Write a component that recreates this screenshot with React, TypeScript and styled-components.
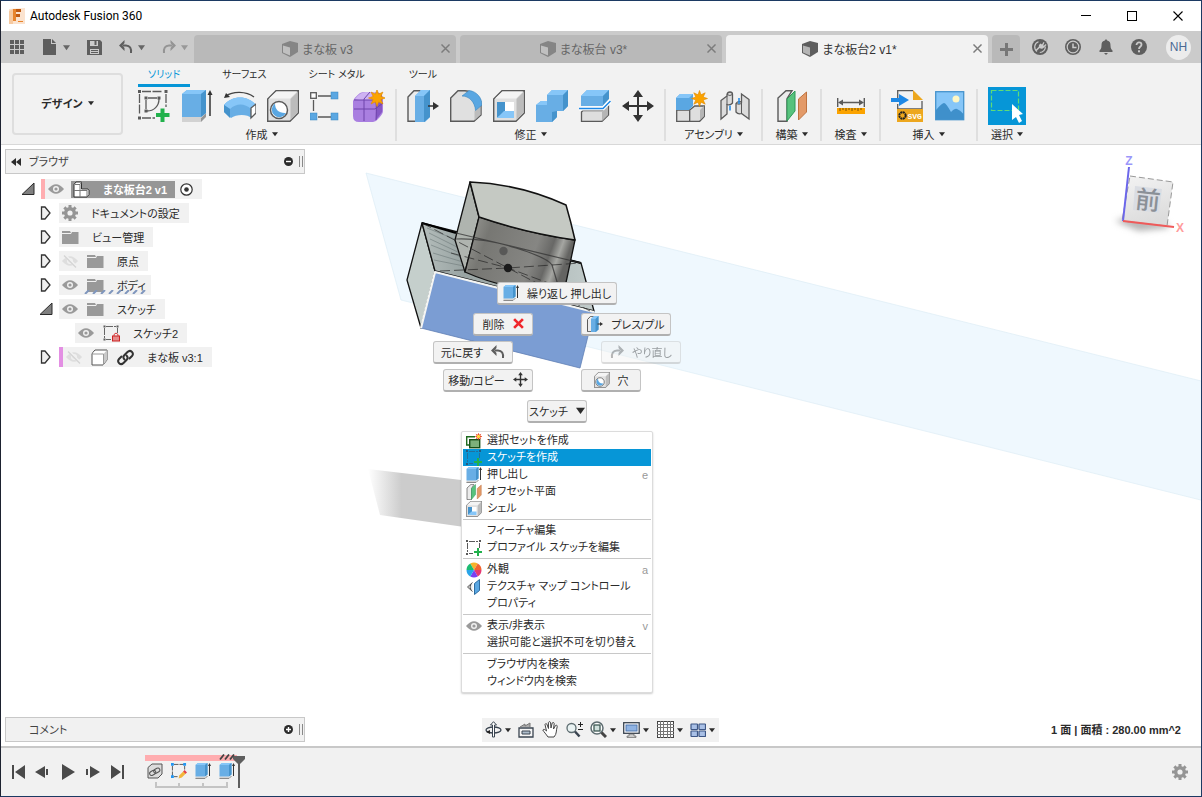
import React from "react";
import styled, { createGlobalStyle, css } from "styled-components";

const GlobalStyle = createGlobalStyle`
  *, *::before, *::after { box-sizing: border-box; }
  body {
    margin: 0;
    background: #fff;
    color: #2b2b2b;
    font-family: "Liberation Sans", "Noto Sans CJK JP", sans-serif;
    font-size: 11px;
    font-feature-settings: "palt";
  }
  button {
    margin: 0;
    padding: 0;
    border: 0;
    background: none;
    color: inherit;
    font: inherit;
    font-feature-settings: inherit;
    white-space: nowrap;
  }
  ul { list-style: none; margin: 0; padding: 0; }
  svg { display: block; flex: none; }
`;

/* ---------- frame ---------- */

const Window = styled.div`
  display: flex;
  flex-direction: column;
  min-height: 100vh;
  border: 1px solid #1c3a63;
  border-left-color: #1d2230;
`;

const TitleBar = styled.header`
  display: flex;
  align-items: center;
  height: 30px;
  padding-left: 8px;
  gap: 5px;
  background: #fff;
  color: #000;
`;

const WindowTitle = styled.h1`
  margin: 0;
  flex: 1;
  font: 400 12px Roboto, "Noto Sans", sans-serif;
`;

const Captions = styled.div`
  display: flex;
`;

const CaptionButton = styled.button`
  display: grid;
  place-items: center;
  width: 46px;
  height: 30px;
`;

const TabStrip = styled.div`
  display: flex;
  align-items: center;
  height: 32px;
  background: #cbcbcb;
  color: #666;
`;

const QuickTools = styled.div`
  display: flex;
  align-items: center;
  width: 189px;
  padding-left: 9px;
  gap: 17px;
`;

const QuickButton = styled.button<{ $dim?: boolean }>`
  display: flex;
  align-items: center;
  gap: 5px;
  opacity: ${(p) => (p.$dim ? 0.5 : 1)};
`;

const DocumentTabs = styled.div`
  display: flex;
  flex: 1;
  align-self: flex-end;
  gap: 4px;
  padding: 0 4px;
`;

const DocumentTab = styled.div<{ $active?: boolean }>`
  display: flex;
  flex: 1;
  align-items: center;
  height: 28px;
  padding: 0 6px 1px 0;
  border-radius: 4px 4px 0 0;
  background: ${(p) => (p.$active ? "#f2f2f2" : "#b9b9b9")};
  color: ${(p) => (p.$active ? "#333" : "#666")};
`;

const DocumentName = styled.button`
  display: flex;
  flex: 1;
  align-items: center;
  justify-content: center;
  gap: 4px;
  font-size: 12px;
`;

const IconButton = styled.button`
  display: grid;
  place-items: center;
`;

const CloseTab = styled(IconButton)`
  color: #7c7c7c;
`;

const NewTab = styled(IconButton)`
  align-self: flex-end;
  width: 28px;
  height: 28px;
  border-radius: 4px 4px 0 0;
  background: #b9b9b9;
`;

const Account = styled.div`
  display: flex;
  align-items: center;
  gap: 17px;
  padding: 0 10px 0 12px;
`;

const Avatar = styled.button`
  width: 25px;
  height: 25px;
  margin-left: 2px;
  border-radius: 50%;
  background: #ececec;
  color: #4b6a94;
  font-size: 12px;
`;

/* ---------- ribbon ---------- */

const Ribbon = styled.div`
  display: flex;
  height: 82px;
  border-bottom: 1px solid #d8d8d8;
  background: #f2f2f2;
`;

const Workspace = styled.button`
  display: flex;
  align-items: center;
  justify-content: center;
  gap: 5px;
  flex: none;
  width: 111px;
  height: 62px;
  margin: 10px 5px 0 11px;
  padding-bottom: 2px;
  border: 2px solid #dedede;
  border-radius: 4px;
  font-weight: 700;
`;

const RibbonBody = styled.div`
  display: flex;
  flex-direction: column;
  flex: 1;
`;

const RibbonTabs = styled.div`
  display: flex;
  gap: 22px;
  height: 24px;
  padding-left: 10px;
`;

const RibbonTab = styled.button<{ $active?: boolean }>`
  min-width: 52px;
  height: 24px;
  padding: 0 10px;
  border-bottom: 3px solid ${(p) => (p.$active ? "#0696d7" : "transparent")};
  color: ${(p) => (p.$active ? "#0696d7" : "inherit")};
  font-size: 10px;
`;

const Groups = styled.div`
  display: flex;
`;

const Group = styled.div`
  display: flex;
  flex-direction: column;
  align-items: center;
  min-width: 59px;
  height: 52px;
  margin-top: 2px;
  padding: 0 10px;
  border-right: 2px solid #dfdfdf;
  &:last-child {
    min-width: 0;
    border-right: 0;
  }
`;

const GroupIcons = styled.div`
  display: flex;
  flex: none;
  align-items: center;
  gap: 11px;
  height: 34px;
`;

const SelectTool = styled(IconButton)`
  width: 38px;
  height: 38px;
  background: #0696d7;
`;

const GroupLabel = styled.button`
  display: flex;
  flex: none;
  align-items: center;
  gap: 4px;
  height: 18px;
  padding-top: 3px;
`;

/* ---------- canvas ---------- */

const Canvas = styled.main`
  position: relative;
  display: flex;
  flex: 1;
  flex-direction: column;
  justify-content: space-between;
  min-height: 560px;
  overflow: hidden;
  background: #fff;
`;

const Scene = styled.svg`
  position: absolute;
  inset: 0;
  width: 100%;
  height: 100%;
`;

const CanvasTop = styled.div`
  position: relative;
  display: flex;
  align-items: flex-start;
  justify-content: space-between;
  padding: 4px 10px 0 4px;
`;

const Browser = styled.nav`
  width: 300px;
`;

const PanelHeader = styled.div`
  display: flex;
  align-items: center;
  width: 300px;
  height: 25px;
  padding: 0 1px 0 5px;
  border: 1px solid #c8c8c8;
  background: #f1f1f1;
  color: #444;
`;

const PanelTitle = styled.span`
  flex: 1;
  padding: 0 0 2px 8px;
`;

const PanelGrip = styled.span`
  width: 4px;
  height: 11px;
  margin-left: 6px;
  border: solid #888;
  border-width: 0 1px;
`;

const CollapseSlot = styled.span`
  width: 10px;
`;

const Tree = styled.ul`
  padding-top: 3px;
`;

const TreeRow = styled.li<{ $level: number }>`
  display: flex;
  align-items: center;
  gap: 6px;
  height: 24px;
  padding-left: ${(p) => 16 + p.$level * 18}px;
`;

const Twisty = styled.button`
  display: grid;
  place-items: center;
  width: 14px;
  height: 16px;
`;

const TreeItem = styled.div<{ $bar?: string }>`
  display: flex;
  align-items: center;
  gap: 9px;
  height: 20px;
  padding: 0 9px 0 3px;
  background: #f1f1f1;
  ${(p) =>
    p.$bar &&
    css`
      border-left: 4px solid ${p.$bar};
    `}
`;

const TreeName = styled.span`
  padding: 0 0 1px 4px;
`;

const ComponentChip = styled.span`
  display: flex;
  align-items: center;
  gap: 13px;
  height: 17px;
  margin: 0 -4px 0 -2px;
  padding: 0 8px 0 2px;
  background: #969696;
  color: #fff;
  font-weight: 700;
`;

const HatchedItem = styled.span`
  position: relative;
  display: flex;
  align-items: center;
  gap: 13px;
  height: 20px;
  margin-right: -8px;
  padding-right: 4px;
`;

const RowHatch = styled.svg`
  position: absolute;
  left: -3px;
  bottom: 1px;
  width: 100%;
  height: 4px;
`;

const MarkingButton = styled.button<{ $x: number; $y: number; $w: number; $dim?: boolean }>`
  position: absolute;
  left: ${(p) => p.$x}px;
  top: ${(p) => p.$y}px;
  display: flex;
  align-items: center;
  justify-content: center;
  gap: 8px;
  min-width: ${(p) => p.$w}px;
  height: 23px;
  padding-bottom: 1px;
  border: 1px solid #c4c4c4;
  border-bottom: 2px solid #b0b0b0;
  border-radius: 3px;
  background: #f2f2f2;
  opacity: ${(p) => (p.$dim ? 0.45 : 1)};
`;

const ContextMenu = styled.div`
  position: absolute;
  left: 460px;
  top: 286px;
  width: 192px;
  padding: 0 1px 2px;
  border: 1px solid #dcdcdc;
  border-radius: 2px;
  background: #fff;
  box-shadow: 0 1px 2px rgba(0, 0, 0, 0.2);
`;

const MenuItem = styled.button<{ $selected?: boolean }>`
  display: flex;
  align-items: center;
  gap: 5px;
  width: 100%;
  height: 17px;
  padding: 0 3px;
  background: ${(p) => (p.$selected ? "#0696d7" : "transparent")};
  color: ${(p) => (p.$selected ? "#fff" : "inherit")};
`;

const MenuIcon = styled.span`
  width: 16px;
  height: 16px;
`;

const MenuText = styled.span`
  flex: 1;
  padding-bottom: 3px;
  text-align: left;
`;

const Shortcut = styled.kbd`
  color: #999;
  font: inherit;
`;

const MenuRule = styled.hr`
  height: 1px;
  margin: 2px 0;
  border: 0;
  background: #c8c8c8;
`;

const CanvasBottom = styled.div`
  position: relative;
  display: grid;
  grid-template-columns: 1fr auto 1fr;
  align-items: center;
  padding: 0 5px 4px 4px;
`;

const NavBar = styled.div`
  display: flex;
  align-items: center;
  justify-content: space-between;
  width: 237px;
  height: 24px;
  padding: 0 4px 0 3px;
  background: #f1f1f1;
`;

const NavButton = styled.button`
  display: flex;
  align-items: center;
  gap: 3px;
`;

const Status = styled.p`
  margin: 0;
  padding: 0 15px 2px 0;
  text-align: right;
  font-weight: 700;
`;

/* ---------- timeline ---------- */

const Timeline = styled.footer`
  display: flex;
  align-items: center;
  height: 50px;
  padding: 0 13px 0 9px;
  border-top: 2px solid #c8c8c8;
  background: #f1f1f1;
`;

const Playback = styled.div`
  display: flex;
  gap: 9px;
  width: 135px;
`;

const History = styled.div`
  display: flex;
  flex-direction: column;
  width: 92px;
  height: 34px;
  border-top: 6px solid #ffadb0;
`;

const HistoryIcons = styled.div`
  display: flex;
  gap: 8px;
  padding: 2px 2px 3px;
`;

const HistoryButton = styled(IconButton)`
  position: relative;
`;

const Hatch = styled.svg`
  position: absolute;
  left: 0;
  top: -9px;
`;

const Marker = styled.svg`
  margin-left: -4px;
`;

const Spacer = styled.div`
  flex: 1;
`;

/* ---------- icons ---------- */

type IconProps = { size?: number };

const Art = ({ size = 32, box = 32, children }: { size?: number; box?: number; children: React.ReactNode }) => (
  <svg width={size} height={size} viewBox={`0 0 ${box} ${box}`} aria-hidden="true">
    {children}
  </svg>
);

const Caret = ({ size = 7 }: IconProps) => (
  <svg width={size} height={size} viewBox="0 0 8 8" aria-hidden="true">
    <path d="M0 1.500h8L4 7z" fill="currentColor" />
  </svg>
);

const Cross = ({ size = 9, width = 1.6 }: { size?: number; width?: number }) => (
  <svg width={size} height={size} viewBox="0 0 10 10" aria-hidden="true">
    <path d="M.5.5l9 9M9.500.5l-9 9" stroke="currentColor" strokeWidth={width} fill="none" />
  </svg>
);

const starPoints = (cx: number, cy: number, outer: number, inner: number, n: number) =>
  Array.from({ length: n * 2 }, (_, i) => {
    const r = i % 2 ? inner : outer;
    const a = (Math.PI * i) / n - Math.PI / 2;
    return `${(cx + r * Math.cos(a)).toFixed(1)},${(cy + r * Math.sin(a)).toFixed(1)}`;
  }).join(" ");

const Star = ({ cx = 24, cy = 8, r = 8.5 }) => (
  <polygon points={starPoints(cx, cy, r, r * 0.5, 8)} fill="#fba300" stroke="#e08a00" strokeWidth=".6" />
);

const Logo = () => (
  <Art size={16} box={16}>
    <path d="M0 1l16-1v16H0z" fill="#fbe3cf" />
    <path d="M0 3l4-2v15H0z" fill="#f6c9a0" />
    <path d="M4 1h8v3H7v2h4v3H7v4H4z" fill="#c05a12" />
    <path d="M4 1h3v12H4z" fill="#e8842c" />
    <path d="M9 13h5v1H9z" fill="#e8842c" />
  </Art>
);

const DocCube = ({ tone = "#666", light = "#b5b5b5" }) => (
  <Art size={16} box={16}>
    <path d="M0 3l8-3 8 2v9l-8 5-8-4z" fill={tone} />
    <path d="M1 4.500l7 2v8L1 11.500z" fill={light} />
  </Art>
);

const GridIcon = () => (
  <Art size={15} box={15}>
    {[0, 5, 10].map((x) => [0, 5, 10].map((y) => <rect key={`${x}-${y}`} x={x} y={y} width="4" height="4" fill="#5e5e5e" />))}
  </Art>
);

const FileIcon = () => (
  <Art size={16} box={16}>
    <path d="M1 0h8v5h5v11H1z" fill="#5e5e5e" />
    <path d="M10 0l4 4h-4z" fill="#5e5e5e" />
  </Art>
);

const SaveIcon = () => (
  <Art size={15} box={15}>
    <path d="M0 0h13l2 2v13H0z" fill="#5e5e5e" />
    <path d="M3 1h8v5H3zM3 9h9v5H3z" fill="#cbcbcb" />
    <path d="M7.500 1h2v4h-2zM4 10h7v1H4zM4 12h7v1H4z" fill="#5e5e5e" />
  </Art>
);

const UndoIcon = ({ size = 14, flip = false }: { size?: number; flip?: boolean }) => (
  <svg width={size} height={size} viewBox="0 0 14 14" aria-hidden="true">
    <g transform={flip ? "matrix(-1 0 0 1 14 0)" : undefined}>
      <path d="M4 5.500h3c4 0 5.500 3 5 7.500" fill="none" stroke="#5e5e5e" strokeWidth="2" />
      <path d="M5.500 0v3L3.500 5.500l2 2.500v3L0 5.500z" fill="#5e5e5e" />
    </g>
  </svg>
);

const ExtensionsIcon = () => (
  <Art size={16} box={16}>
    <circle cx="8" cy="8" r="8" fill="#5e5e5e" />
    <path d="M5 12.500A5.500 5.500 0 0 1 6.500 2.800M13.300 7.500a5.500 5.500 0 0 1-5.500 6" stroke="#cbcbcb" strokeWidth="1.200" fill="none" />
    <path d="M8.500 4.500l1.500 1 1.500-2.500 1 .6-1.300 2.700.6.400 2-1.700.7.900-2.500 2.600q-2 2-4.300.6L4.500 12 3.500 11l3.300-3.300q-.5-2 1.700-3.200z" fill="#cbcbcb" />
  </Art>
);

const ClockIcon = () => (
  <Art size={16} box={16}>
    <circle cx="8" cy="8" r="8" fill="#5e5e5e" />
    <circle cx="8" cy="8" r="5.800" fill="none" stroke="#cbcbcb" strokeWidth="1.200" />
    <path d="M8 4.500V8.500h3.500" fill="none" stroke="#cbcbcb" strokeWidth="1.500" />
  </Art>
);

const BellIcon = () => (
  <Art size={16} box={16}>
    <path d="M8 0l1.200 1.500C12 2 12.500 4 12.500 6.500c0 3 1 4 2 5V13h-13v-1.500c1-1 2-2 2-5C3.500 4 4 2 6.800 1.500zM6 14h4l-2 2z" fill="#5e5e5e" />
  </Art>
);

const HelpIcon = () => (
  <Art size={16} box={16}>
    <circle cx="8" cy="8" r="8" fill="#5e5e5e" />
    <path d="M5.500 6c0-3.500 5-3.200 5-.3C10.500 7.500 8 7.500 8 10" fill="none" stroke="#cbcbcb" strokeWidth="1.800" />
    <rect x="7" y="11.300" width="2" height="2" fill="#cbcbcb" />
  </Art>
);

const node = (x: number, y: number, s = 3) => <rect key={`${x},${y}`} x={x - s / 2} y={y - s / 2} width={s} height={s} fill="#5a5a5a" />;

const CreateSketch = ({ size = 32 }: IconProps) => (
  <Art size={size}>
    <path d="M4 1.500h21M1.500 4v21M28 4v13M4 28h13" stroke="#5a5a5a" strokeWidth="1.300" strokeDasharray="9 1.500" fill="none" />
    <path d="M10 8h9M8 10v9M21 9c0 7-5 12-12 12" stroke="#5a5a5a" strokeWidth="1.300" fill="none" />
    {node(1.5, 1.5)}
    {node(28, 1.5)}
    {node(1.5, 28)}
    {node(8, 8)}
    {node(21, 8)}
    {node(8, 21)}
    <path d="M22.500 18.500h4v4.500h5v4h-5v5h-4v-5H18v-4h4.500z" fill="#22b14c" />
  </Art>
);

const SketchSmall = ({ dim = false }: { dim?: boolean }) => (
  <Art size={16} box={16}>
    <path d="M3 1.500h9M1.500 3v9M13.500 3v5M3 13.500h4" stroke={dim ? "#256f9c" : "#5a5a5a"} strokeDasharray="6 1" fill="none" />
    {[[0, 0], [13, 0], [0, 13]].map(([x, y]) => (
      <rect key={`${x}${y}`} x={x} y={y} width="2" height="2" fill={dim ? "#255a80" : "#5a5a5a"} />
    ))}
    <path d="M11 8h2v3h3v2h-3v3h-2v-3H8v-2h3z" fill="#22b14c" />
  </Art>
);

const Extrude = ({ size = 32 }: IconProps) => {
  const small = size < 20;
  return (
    <Art size={size}>
      <path d="M1 27h19v5H1z" fill="#d2d2d2" />
      <path d={small ? "M1 31h19l5-5" : "M20 28l5-5v4l-5 5z"} fill={small ? "none" : "#969696"} stroke={small ? "#8a8a8a" : "none"} strokeWidth="2" />
      <path d="M1 4l5-4h19v23l-5 4H1z" fill="#68aee5" />
      <path d="M1 4l5-4h19l-5 4z" fill="#86c6f8" />
      <path d="M20 4l5-4v23l-5 4z" fill="#4593cc" />
      <path d="M29 26V3" stroke="#333" strokeWidth={small ? 2 : 1.5} />
      <path d={small ? "M26 6l3-6 3 6z" : "M26.500 5L29 0l2.500 5z"} fill="#333" />
    </Art>
  );
};

const Sweep = () => (
  <Art>
    <path d="M2 6c7-5 20-5 28 1" stroke="#444" strokeWidth="1.400" fill="none" />
    <path d="M0 8l2-5 4 4z" fill="#333" />
    <path d="M0 15c8-10 24-10 32 0l-5 13c-3-4-15-4-20 0L0 22z" fill="#68aee5" />
    <path d="M0 15c8-10 24-10 32 0l-5 4c-6-6-15-6-21 0z" fill="#86c6f8" />
    <path d="M6 19v9l-6-6v-7z" fill="#4593cc" />
    <path d="M27 18l5-4v9l-5 5z" fill="#fff" stroke="#5a5a5a" strokeWidth="1.300" />
  </Art>
);

const BoxBase = () => (
  <>
    <path d="M.7 9L9 .7h22.300V23L23 31.300H.7z" fill="#e0e0e0" stroke="#5a5a5a" strokeWidth="1.400" />
    <path d="M2 8.500L9.500 1.500H30L23 8.500z" fill="#f4f4f4" />
    <path d="M23.500 9L30.600 2v20.500l-7.100 7.500z" fill="#bcbcbc" />
  </>
);

const Hole = ({ size = 32 }: IconProps) => (
  <Art size={size}>
    <BoxBase />
    <circle cx="12" cy="20" r="8.500" fill="#fff" stroke="#5a5a5a" strokeWidth="1.500" />
    <path d="M8 13.500c0 6 4 10 11 9.500a7.500 7.500 0 1 1-11-9.500z" fill="#5aa7e2" />
  </Art>
);

const Pattern = () => (
  <Art>
    <path d="M8 6h13M3.500 10v11M8 27h13" stroke="#5a5a5a" strokeWidth="1.300" />
    <rect x=".7" y="2.700" width="5.600" height="5.600" fill="#fff" stroke="#5a5a5a" strokeWidth="1.300" />
    {[[21, 2], [0, 23], [21, 23]].map(([x, y]) => (
      <rect key={`${x}-${y}`} x={x} y={y} width="7" height="7" fill="#5aa7e2" stroke="#3a86c0" strokeWidth=".5" />
    ))}
  </Art>
);

const Form = () => (
  <Art>
    <path d="M0 11Q1 8 7 3Q9 2 12 2h12q6 1 6 8v11q0 3-5 8-2 3-5 3H6q-6 0-6-6z" fill="#a97fe0" />
    <path d="M2 9Q7 2 13 2h10l-3 8H6z" fill="#ceb2f3" />
    <path d="M23 9l6-5v18l-6 8z" fill="#8658c4" />
    <path d="M11 9v22M1 19h21l8-6M11 9l6-7M1 10h21q2 0 1 20" stroke="#6f44ab" strokeWidth="1" fill="none" />
    <Star cx={24} cy={8} r={8.5} />
  </Art>
);

const PressPull = ({ size = 32 }: IconProps) => (
  <Art size={size}>
    <path d="M1 7l6-6.300h6V31.300H1z" fill="#ececec" stroke="#5a5a5a" strokeWidth={size < 20 ? 2 : 1.4} />
    <path d="M8 6l6-6h9v27l-5 5H8z" fill="#68aee5" />
    <path d="M8 6l6-6h9l-6 6z" fill="#86c6f8" />
    <path d="M17 6l6-6v27l-6 5z" fill="#4593cc" />
    <path d="M21 16h7" stroke="#333" strokeWidth={size < 20 ? 2.2 : 1.5} />
    <path d="M26 12l6 4-6 4z" fill="#333" />
  </Art>
);

const Fillet = () => (
  <Art>
    <path d="M.7 8L8 .7h7c10 1 16 8 16 14V25l-7 6.300H.7z" fill="#e0e0e0" stroke="#5a5a5a" strokeWidth="1.400" />
    <path d="M24.500 21l6-5v8.500l-6 6z" fill="#bcbcbc" />
    <path d="M12 6l7-5.500C27 1.500 32 8 32 15l-6.500 5.500C25 12 19 6 12 6z" fill="#5aa7e2" stroke="#3a86c0" strokeWidth=".6" />
  </Art>
);

const Shell = ({ size = 32 }: IconProps) => (
  <Art size={size}>
    <BoxBase />
    <rect x="4" y="12" width="17" height="16" fill="#fff" />
    <path d="M4 12h8v10l-8 6z" fill="#4593cc" />
    <path d="M4 28l7-7h10v7z" fill="#86c6f8" />
  </Art>
);

const Combine = () => (
  <Art>
    <path d="M0 15l5-4h6V5l5-5h16v16l-5 5h-6v6l-5 5H0z" fill="#68aee5" />
    <path d="M0 15l5-4h6v4zM11 5l5-5h16l-5 5z" fill="#86c6f8" />
    <path d="M27 5l5-5v16l-5 5zM16 22l5-1v6l-5 5z" fill="#4593cc" />
  </Art>
);

const Split = () => (
  <Art>
    <path d="M2.500 22L4 20.500h20l5.500-5V25L23 31.300H2.500z" fill="#dedede" stroke="#5a5a5a" strokeWidth="1.300" />
    <path d="M23 22l6-6v9l-6 6z" fill="#b5b5b5" />
    <path d="M2 6l6-6h22v8l-6 8H2z" fill="#68aee5" />
    <path d="M2 6l6-6h22l-6 6z" fill="#86c6f8" />
    <path d="M24 6l6-6v9l-6 6z" fill="#4593cc" />
    <path d="M0 18.500h24l8-8" stroke="#fff" strokeWidth="4" fill="none" />
    <path d="M0 18.500h24l7.500-7.500" stroke="#1e88e5" strokeWidth="1.500" fill="none" />
  </Art>
);

const Move = ({ size = 32 }: IconProps) => (
  <Art size={size}>
    <path d="M16 5v22M5 16h22" stroke="#333" strokeWidth={size < 20 ? 3 : 2} />
    <path d="M16 0l5 7H11zM16 32l5-7H11zM0 16l7-5v10zM32 16l-7-5v10z" fill="#333" />
  </Art>
);

const NewComponent = () => (
  <Art>
    <path d="M.7 20h13v11.300H.7z" fill="#dedede" stroke="#5a5a5a" strokeWidth="1.300" />
    <path d="M13.700 20l5-4h9.600v10.500l-4.600 4.800h-10z" fill="#dedede" stroke="#5a5a5a" strokeWidth="1.300" />
    <path d="M24 20l4-4v10l-4 4z" fill="#b5b5b5" />
    <path d="M0 8l4-4h13v12l-4 4H0z" fill="#5aa7e2" />
    <path d="M0 8l4-4h13l-4 4z" fill="#86c6f8" />
    <Star cx={23.5} cy={8.5} r={8} />
  </Art>
);

const Joint = () => (
  <Art>
    <path d="M2 10.500L8 6V4.500Q8.500 2 11 2t2.500 2.500V13q-2 2.500-5.500 1.500V24l-6 5z" fill="#dcdcdc" stroke="#5a5a5a" strokeWidth="1.300" />
    <path d="M8 6v9M8 4.500q3 2 5.500 0" stroke="#5a5a5a" fill="none" />
    <path d="M30 9.500L22.500 4v8q-4-1-5.500 1.500V22q2 2.500 5.500 1.500L30 29z" fill="#dcdcdc" stroke="#5a5a5a" strokeWidth="1.300" />
    <path d="M22.500 12v11.500M17 13.500q3 1.500 5.500 0" stroke="#5a5a5a" fill="none" />
    <path d="M11 15.500v5M20 8v6" stroke="#1e88e5" strokeWidth="1.500" />
  </Art>
);

const OffsetPlane = ({ size = 32 }: IconProps) => (
  <Art size={size}>
    <path d="M2 8l8-7.300h6l-5 8v22.600H2z" fill="#ececec" stroke="#5a5a5a" strokeWidth="1.400" />
    <path d="M11 9l8-8v20l-8 10z" fill="#57c27d" stroke="#2f9a58" />
    <path d="M22.500 9l8-7v20l-8 8z" fill="#e39a68" stroke="#bf7340" />
  </Art>
);

const Measure = () => (
  <Art>
    <path d="M2.700 8v9M29.300 8v9M5 12.500h22" stroke="#5a5a5a" strokeWidth="1.400" />
    <path d="M3 12.500l5-3v6zM29 12.500l-5-3v6z" fill="#5a5a5a" />
    <rect x="2" y="18" width="28" height="6" fill="#fba300" />
    <path d="M5 18v3M8 18v2M11 18v3M14 18v2M17 18v3M20 18v2M23 18v3M26 18v2" stroke="#7a5200" />
  </Art>
);

const InsertSvg = () => (
  <Art>
    <path d="M6.700 8V.7H22M31 11v8H6.700v-5" fill="none" stroke="#5a5a5a" strokeWidth="1.300" />
    <path d="M22 0l10 10H22z" fill="#eda71e" />
    <path d="M0 8h8V4l10 6-10 6v-4H0z" fill="#1e88e5" />
    <rect x="6" y="19" width="26" height="13" fill="#eda71e" />
    <circle cx="11.500" cy="25.500" r="3.200" fill="none" stroke="#222" strokeWidth="2" strokeDasharray="2 .5" />
    <text x="16.500" y="29" fontSize="8" fontWeight="700" fontFamily="Liberation Mono" fill="#fff">SVG</text>
  </Art>
);

const Decal = () => (
  <Art>
    <rect x="1.700" y="1.700" width="28" height="28" fill="#86c6f8" stroke="#4593cc" strokeWidth="1.300" />
    <circle cx="22" cy="9" r="3.500" fill="#fff7c4" />
    <path d="M2 20q6-7 8-7t7 9q4-4 6-3 3 1 6.500 5v5.500H2z" fill="#3f90cb" />
  </Art>
);

const SelectArt = () => (
  <Art size={38} box={38}>
    <rect x="3.500" y="3.500" width="27" height="20" fill="none" stroke="#5edc78" strokeWidth="1.200" strokeDasharray="5 2" />
    <path d="M24 17v16l4-3 3 6 3-2-3-6 4-1z" fill="#fff" />
  </Art>
);

const Eye = ({ off = false }: { off?: boolean }) => (
  <Art size={16} box={16}>
    <path d="M0 8q8-9.500 16 0-8 9.500-16 0z" fill={off ? "#dedede" : "#9a9a9a"} />
    <circle cx="8" cy="8" r="3" fill="#f1f1f1" />
    <circle cx="8" cy="8" r="1.600" fill={off ? "#dedede" : "#9a9a9a"} />
    {off && <path d="M2 1.500l13 13" stroke="#f1f1f1" strokeWidth="3" />}
    {off && <path d="M2 2.500l12 12" stroke="#d4d4d4" strokeWidth="1.200" />}
  </Art>
);

const Gear = () => (
  <Art size={16} box={16}>
    <circle cx="8" cy="8" r="4.300" fill="none" stroke="#959595" strokeWidth="3.400" />
    {[0, 45, 90, 135].map((a) => (
      <path key={a} d="M6.500 0h3v3h-3zM6.500 13h3v3h-3z" fill="#959595" transform={`rotate(${a} 8 8)`} />
    ))}
  </Art>
);

const Folder = () => (
  <Art size={17} box={17}>
    <path d="M0 2h8l1 2H0zM10 3h6.500v12H0V5h9z" fill="#999" />
  </Art>
);

const ComponentIcon = () => (
  <Art size={17} box={17}>
    <path d="M1 3.500L3 1h5.500v7h6.500l1 1v4.500L14 16H1z" fill="#fff" stroke="#333" />
    <path d="M1.500 3.500h5.500L8.500 1.500M7 3.500V16M1 9.500h13V16M14 9.500l1.500-1.500" stroke="#777" fill="none" />
  </Art>
);

const BodyIcon = () => (
  <Art size={17} box={17}>
    <path d="M1 5q0-1 3-4h12v10l-4 5H1z" fill="#fff" stroke="#555" />
    <path d="M12.500 5L16 1v10l-3.500 4z" fill="#c9c9c9" />
    <path d="M1 5h11.500v11" stroke="#999" fill="none" />
  </Art>
);

const LinkIcon = () => (
  <Art size={17} box={17}>
    <g fill="none" stroke="#333" strokeWidth="2" strokeLinecap="round">
      <path d="M7.500 10.500c-2-2-1-3.500 0-4.500l3-3c3-3 7 1 4.500 4l-2.500 2.500" />
      <path d="M9.500 6.500c2 2 1 3.500 0 4.500l-3 3c-3 3-7-1-4.500-4l2.500-2.500" />
    </g>
  </Art>
);

const LockedSketch = () => (
  <Art size={17} box={17}>
    <path d="M3 1.500h10M1.500 3v10M14.500 3v5M3 14.500h5" stroke="#666" strokeDasharray="7 1" fill="none" />
    {node(1.5, 1.5, 2)}
    {node(14.5, 1.5, 2)}
    {node(1.5, 14.5, 2)}
    <path d="M11 11V9.500q2-3 4 0V11" stroke="#d63434" fill="none" />
    <rect x="9.500" y="11" width="7" height="5" fill="#e58a8a" stroke="#c22" />
  </Art>
);

const Radio = () => (
  <Art size={13} box={13}>
    <circle cx="6.500" cy="6.500" r="5.700" fill="#fff" stroke="#333" strokeWidth="1.200" />
    <circle cx="6.500" cy="6.500" r="2.300" fill="#333" />
  </Art>
);

const TwistyArt = ({ open }: { open?: boolean }) => (
  <Art size={14} box={14}>
    {open ? <path d="M13 1v11.500H1z" fill="#808080" stroke="#2b2b2b" /> : <path d="M2.500 1H6l5 6-5 6H2.500z" fill="#efefef" stroke="#333" strokeWidth="1.300" />}
  </Art>
);

const RoundSign = ({ plus }: { plus?: boolean }) => (
  <Art size={9} box={9}>
    <circle cx="4.500" cy="4.500" r="4.500" fill="#2b2b2b" />
    <path d={plus ? "M2 4.500h5M4.500 2v5" : "M2 4.500h5"} stroke="#fff" strokeWidth="1.400" />
  </Art>
);

const SelectionSet = () => (
  <Art size={16} box={16}>
    <path d="M3 12H.7V3.700H9" fill="none" stroke="#1f6b1f" strokeWidth="1.400" />
    <rect x="3.700" y="6.700" width="10" height="8" fill="#7db07a" stroke="#174f17" strokeWidth="1.400" />
    <polygon points={starPoints(12.5, 3.5, 4, 1.8, 8)} fill="#e63a1c" />
    <circle cx="12.500" cy="3.500" r="1.700" fill="#ffd83a" />
  </Art>
);

const wheel = ["#f7b32b", "#f26430", "#e63973", "#7a3ff2", "#28a4e8", "#1dbb72"];

const Appearance = () => (
  <Art size={16} box={16}>
    {wheel.map((c, i) => {
      const p = (k: number) => `${8 + 7.5 * Math.sin(((k - 0.5) * Math.PI) / 3)} ${8 - 7.5 * Math.cos(((k - 0.5) * Math.PI) / 3)}`;
      return <path key={c} d={`M8 8L${p(i)}A7.500 7.500 0 0 1 ${p(i + 1)}z`} fill={c} />;
    })}
  </Art>
);

const TextureMap = () => (
  <Art size={16} box={16}>
    <path d="M6.500 3.500L1.500 8l5 4.500M5 5q-2 3 0 6" fill="#e8e8e8" stroke="#555" />
    <path d="M8.500 4.500l5-4v11l-5 4z" fill="#5aa7e2" stroke="#2c6ca0" />
  </Art>
);

const ink = { fill: "none", stroke: "#3a4450", strokeWidth: 1.3 };

const Orbit = () => (
  <Art size={17} box={17}>
    <ellipse cx="8.500" cy="9" rx="7.500" ry="3" {...ink} />
    <path d="M7.500 16V4H5.500L8.500.7l3 3.300h-2v12z" fill="#fff" stroke="#3a4450" />
    <path d="M1 11l4-2v4z" fill="#222" />
  </Art>
);

const LookAt = () => (
  <Art size={16} box={16}>
    <path d="M1 6h14v9H1z" fill="#f5f5f5" stroke="#3a4450" strokeWidth="1.300" />
    <path d="M4 9h8v3H4z" fill="#aebdcb" stroke="#3a4450" />
    <path d="M2 5l5-3v2l5-3v4" fill="#aaa" stroke="#777" />
  </Art>
);

const Hand = () => (
  <Art size={17} box={17}>
    <path d="M6 16C4 13 2 11 .8 9c1-1.500 2.700 0 3.700 1L3 3.500C3.500 2 5 2.500 5.200 4L6.500 7.500 6.400 1.500c.6-1.300 2-1 2.200.3L9 7l1.200-5c.8-1 2-.5 2 .7L11.500 8l2-3.500c1-.8 2 0 1.700 1.200C14 9 15 13 12 16z" fill="#fff" stroke="#444" />
  </Art>
);

const Zoom = () => (
  <Art size={17} box={17}>
    <circle cx="5.500" cy="7" r="4.500" fill="#e9f2f2" stroke="#5d6c70" strokeWidth="1.300" />
    <path d="M9 10.500l4.500 5" stroke="#3a4450" strokeWidth="2.500" />
    <path d="M12 3.500h5M14.500 1v5M12 8.500h5" stroke="#222" />
  </Art>
);

const Fit = () => (
  <Art size={17} box={17}>
    <circle cx="7" cy="7" r="6" fill="#fff" stroke="#5d6c70" strokeWidth="1.500" />
    <rect x="4" y="4" width="6" height="6" fill="#cfe0dc" stroke="#3f5a55" strokeWidth="1.300" />
    <path d="M11.500 11.500l4.500 4.500" stroke="#444" strokeWidth="3" />
  </Art>
);

const Display = () => (
  <Art size={17} box={17}>
    <rect x=".7" y="1.700" width="15.500" height="10.600" fill="#fff" stroke="#3a4450" strokeWidth="1.300" />
    <rect x="3" y="4" width="11" height="6" fill="#8fb3e3" stroke="#4f76ad" />
    <path d="M6 13h5v2h2v1.500H4V15h2z" fill="#ccc" stroke="#555" strokeWidth=".6" />
  </Art>
);

const GridSettings = () => (
  <Art size={17} box={17}>
    <rect x=".5" y=".5" width="16" height="16" fill="#fff" stroke="#444" />
    <path d="M3.500 0v17M6.500 0v17M10.500 0v17M13.500 0v17M0 3.500h17M0 6.500h17M0 10.500h17M0 13.500h17" stroke="#777" />
  </Art>
);

const Viewports = () => (
  <Art size={16} box={16}>
    {[[1, 2], [9, 2], [1, 9], [9, 9]].map(([x, y]) => (
      <rect key={`${x}-${y}`} x={x} y={y} width="6.500" height="5.500" rx=".5" fill="#a9c0e6" stroke="#3d5685" strokeWidth="1.200" />
    ))}
  </Art>
);

const LinkedBody = () => (
  <Art size={16}>
    <path d="M2 9l8-7h20v20l-8 8H2z" fill="#dcdcdc" stroke="#555" strokeWidth="2" />
    <g fill="none" stroke="#555" strokeWidth="2">
      <rect x="5" y="16" width="13" height="8" rx="4" transform="rotate(-30 11 20)" />
      <rect x="13" y="11" width="13" height="8" rx="4" transform="rotate(-30 20 15)" />
    </g>
  </Art>
);

const EditSketch = () => (
  <Art size={16} box={17}>
    <path d="M3 1.500h11M1.500 3v11M14.500 3v4M3 14.500h4" stroke="#555" strokeDasharray="5 1" fill="none" />
    <path d="M0 0h3v3H0zM13 0h3v3h-3zM0 13h3v3H0z" fill="#2196f3" />
    <path d="M8 16.500l1-3.500 4.500-4.500 2.500 2.500-4.500 4.500z" fill="#f3b53c" />
    <path d="M13 9l1.500-1.500L17 10l-1.500 1.500z" fill="#e23b4e" />
  </Art>
);

/* ---------- data ---------- */

const playback = [
  { name: "先頭へ", d: "M2 1h2v14H2zM15 1v14L5 8z" },
  { name: "前へ", d: "M10 2v12L0 8zM11 5h2v6h-2z" },
  { name: "再生", d: "M2 0l13 8-13 8z" },
  { name: "次へ", d: "M5 2v12l10-6zM1 5h2v6H1z" },
  { name: "最後へ", d: "M1 1v14l10-7zM12 1h2v14h-2z" },
];

const ribbonGroups = [
  { label: "作成", tools: [CreateSketch, Extrude, Sweep, Hole, Pattern, Form] },
  { label: "修正", tools: [PressPull, Fillet, Shell, Combine, Split, Move] },
  { label: "アセンブリ", tools: [NewComponent, Joint] },
  { label: "構築", tools: [OffsetPlane] },
  { label: "検査", tools: [Measure] },
  { label: "挿入", tools: [InsertSvg, Decal] },
];

const navTools = [
  { Icon: Orbit, name: "オービット", drop: true },
  { Icon: LookAt, name: "ビュー正面" },
  { Icon: Hand, name: "画面移動" },
  { Icon: Zoom, name: "ズーム" },
  { Icon: Fit, name: "フィット", drop: true },
  { Icon: Display, name: "表示設定", drop: true },
  { Icon: GridSettings, name: "グリッド", drop: true },
  { Icon: Viewports, name: "ビューポート", drop: true },
];

type Entry = { text: string; icon?: React.ReactNode; shortcut?: string; selected?: boolean };

const menuSections: Entry[][] = [
  [
    { text: "選択セットを作成", icon: <SelectionSet /> },
    { text: "スケッチを作成", icon: <SketchSmall dim />, selected: true },
    { text: "押し出し", icon: <Extrude size={16} />, shortcut: "e" },
    { text: "オフセット平面", icon: <OffsetPlane size={16} /> },
    { text: "シェル", icon: <Shell size={16} /> },
  ],
  [{ text: "フィーチャ編集" }, { text: "プロファイル スケッチを編集", icon: <SketchSmall /> }],
  [
    { text: "外観", icon: <Appearance />, shortcut: "a" },
    { text: "テクスチャ マップ コントロール", icon: <TextureMap /> },
    { text: "プロパティ" },
  ],
  [{ text: "表示/非表示", icon: <Eye />, shortcut: "v" }, { text: "選択可能と選択不可を切り替え" }],
  [{ text: "ブラウザ内を検索" }, { text: "ウィンドウ内を検索" }],
];

/* ---------- 3D scene ---------- */

const Model = () => (
  <Scene aria-hidden="true">
    <defs>
      <linearGradient id="metal" x1="0" x2="1" y1="0" y2=".25">
        <stop offset="0" stopColor="#6e6e6b" />
        <stop offset=".08" stopColor="#92938e" />
        <stop offset=".25" stopColor="#777773" />
        <stop offset=".7" stopColor="#868683" />
        <stop offset=".84" stopColor="#686866" />
        <stop offset=".92" stopColor="#a5a6a2" />
        <stop offset="1" stopColor="#646462" />
      </linearGradient>
      <linearGradient id="deck" x1="0" x2="1">
        <stop offset="0" stopColor="#b4bdbb" />
        <stop offset=".25" stopColor="#98a3a2" />
        <stop offset="1" stopColor="#c2cccb" />
      </linearGradient>
      <linearGradient id="shade" x1="0" x2="1">
        <stop offset="0" stopColor="#fff" />
        <stop offset=".22" stopColor="#ccc" />
      </linearGradient>
    </defs>
    <g transform="translate(-1 -145)">
      <path d="M366 173L3000 829V950L401 300z" fill="#eff8fe" stroke="#dcecf5" strokeWidth=".7" />
      <path d="M368 469L520 487V535L380 515z" fill="url(#shade)" />
      <g strokeLinejoin="round">
        <path d="M422 223L407 280 421 328 435 271z" fill="#c5cfcc" stroke="#111" strokeWidth="1.300" />
        <path d="M422 223L435 271 594 311 581 263z" fill="url(#deck)" stroke="#111" strokeWidth="1.300" />
        <path d="M427 228l30 12M429 233l32 16M430 239l30 14M431 245l30 12M433 253l30 9M434 260l30 6" stroke="#6f7a7a" strokeWidth=".6" />
        <path d="M422 223L456 233M565 259L581 263" stroke="#000" strokeWidth="2" />
        <path d="M435 272L594 312 580 368 421 328z" fill="#7b9dd3" stroke="#5f7fb5" strokeWidth=".8" />
        <path d="M421 328L435 272 594 312" fill="none" stroke="#f4f5f3" strokeWidth="2.200" />
        <path d="M470 182L455 240 465 272 479 217z" fill="#afb4af" stroke="#111" strokeWidth="1.300" />
        <path d="M479 217Q526 233 575 240L564 292Q510 292 465 272z" fill="url(#metal)" stroke="#111" strokeWidth="1.300" />
        <path d="M470 182Q520 184 566 205Q571 222 575 240Q526 233 479 217z" fill="#c5c9c3" stroke="#111" strokeWidth="1.500" />
      </g>
      <path d="M456 233L581 263M456 239Q486 238 516 248Q548 258 552 265L558 285" fill="none" stroke="#333" strokeWidth="1.200" opacity=".75" />
      <path d="M422 223L508 268 590 311M451 253L508 268 594 300M440 271L508 268 581 263" fill="none" stroke="#222" strokeDasharray="10 4" strokeWidth=".8" opacity=".85" />
      <circle cx="503.500" cy="251" r="4.200" fill="#4c4c4c" opacity=".75" />
      <circle cx="508" cy="268" r="4.200" fill="#1b1b1b" />
    </g>
  </Scene>
);

const ViewCube = () => (
  <svg width="80" height="92" viewBox="0 0 80 92" role="img" aria-label="ビューキューブ">
    <defs>
      <linearGradient id="cube" x1="0" x2=".3" y1="0" y2="1">
        <stop offset="0" stopColor="#f3f3f3" />
        <stop offset="1" stopColor="#dcdcdc" />
      </linearGradient>
      <filter id="soft" x="-30%" y="-100%" width="160%" height="300%">
        <feGaussianBlur stdDeviation="3" />
      </filter>
    </defs>
    <path d="M4 72l12-4 40 6 2 5-30 3z" fill="#b5b5b5" filter="url(#soft)" />
    <path d="M19 27L62 33 56 77 11 72z" fill="url(#cube)" stroke="#999" strokeDasharray="6 3" />
    <path d="M24 37l27 3-3 24-26-3z" fill="#dadde3" />
    <text x="37" y="60" fontSize="25" fontWeight="500" fill="#8b9097" textAnchor="middle" transform="rotate(6 37 51)">前</text>
    <path d="M12 72L18 18" stroke="#6b66ea" strokeWidth="2" />
    <path d="M12 72L63 78" stroke="#ef5a5a" strokeWidth="2" />
    <text x="18" y="16" fontSize="12" fontWeight="700" fill="#9b97fa" textAnchor="middle">Z</text>
    <text x="69" y="83" fontSize="12" fontWeight="700" fill="#ff9c9c" textAnchor="middle">X</text>
  </svg>
);

/* ---------- page ---------- */

const Branch = ({ level, open, leaf, bar, children }: { level: number; open?: boolean; leaf?: boolean; bar?: string; children: React.ReactNode }) => (
  <TreeRow $level={level}>
    {leaf ? null : (
      <Twisty aria-label={open ? "閉じる" : "開く"}>
        <TwistyArt open={open} />
      </Twisty>
    )}
    <TreeItem $bar={bar}>{children}</TreeItem>
  </TreeRow>
);

export default function App() {
  return (
    <Window>
      <GlobalStyle />
      <TitleBar>
        <Logo />
        <WindowTitle>Autodesk Fusion 360</WindowTitle>
        <Captions>
          <CaptionButton aria-label="最小化"><Art size={10} box={10}><path d="M0 4.500h10" stroke="#000" /></Art></CaptionButton>
          <CaptionButton aria-label="最大化"><Art size={10} box={10}><rect x=".5" y=".5" width="9" height="9" fill="none" stroke="#000" /></Art></CaptionButton>
          <CaptionButton aria-label="閉じる"><Cross size={10} width={1.1} /></CaptionButton>
        </Captions>
      </TitleBar>

      <TabStrip>
        <QuickTools>
          <QuickButton aria-label="データ パネル"><GridIcon /></QuickButton>
          <QuickButton aria-label="ファイル"><FileIcon /><Caret /></QuickButton>
          <QuickButton aria-label="保存"><SaveIcon /></QuickButton>
          <QuickButton aria-label="元に戻す"><UndoIcon /><Caret /></QuickButton>
          <QuickButton aria-label="やり直し" $dim><UndoIcon flip /><Caret /></QuickButton>
        </QuickTools>
        <DocumentTabs>
          <DocumentTab>
            <DocumentName><DocCube tone="#858585" light="#c0c0c0" />まな板 v3</DocumentName>
            <CloseTab aria-label="閉じる"><Cross /></CloseTab>
          </DocumentTab>
          <DocumentTab>
            <DocumentName><DocCube tone="#858585" light="#c0c0c0" />まな板台 v3*</DocumentName>
            <CloseTab aria-label="閉じる"><Cross /></CloseTab>
          </DocumentTab>
          <DocumentTab $active>
            <DocumentName><DocCube tone="#5e5e5e" />まな板台2 v1*</DocumentName>
            <CloseTab aria-label="閉じる"><Cross /></CloseTab>
          </DocumentTab>
        </DocumentTabs>
        <NewTab aria-label="新規タブ">
          <Art size={13} box={13}><path d="M6.500 0v13M0 6.500h13" stroke="#777" strokeWidth="3" /></Art>
        </NewTab>
        <Account>
          <IconButton aria-label="拡張機能"><ExtensionsIcon /></IconButton>
          <IconButton aria-label="ジョブ ステータス"><ClockIcon /></IconButton>
          <IconButton aria-label="通知"><BellIcon /></IconButton>
          <IconButton aria-label="ヘルプ"><HelpIcon /></IconButton>
          <Avatar>NH</Avatar>
        </Account>
      </TabStrip>

      <Ribbon>
        <Workspace>デザイン <Caret size={6} /></Workspace>
        <RibbonBody>
          <RibbonTabs>
            <RibbonTab $active>ソリッド</RibbonTab>
            <RibbonTab>サーフェス</RibbonTab>
            <RibbonTab>シート メタル</RibbonTab>
            <RibbonTab>ツール</RibbonTab>
          </RibbonTabs>
          <Groups>
            {ribbonGroups.map(({ label, tools }) => (
              <Group key={label}>
                <GroupIcons>
                  {tools.map((Tool, i) => (
                    <IconButton key={i} aria-label={`${label} ${i + 1}`}><Tool /></IconButton>
                  ))}
                </GroupIcons>
                <GroupLabel>{label}<Caret size={6} /></GroupLabel>
              </Group>
            ))}
            <Group>
              <GroupIcons>
                <SelectTool aria-label="選択ツール"><SelectArt /></SelectTool>
              </GroupIcons>
              <GroupLabel>選択<Caret size={6} /></GroupLabel>
            </Group>
          </Groups>
        </RibbonBody>
      </Ribbon>

      <Canvas>
        <Model />
        <CanvasTop>
          <Browser aria-label="ブラウザ">
            <PanelHeader>
              <Art size={10} box={10}><path d="M5 1v8L0 5zM10 1v8L5 5z" fill="#2b2b2b" /></Art>
              <PanelTitle>ブラウザ</PanelTitle>
              <IconButton aria-label="最小化"><RoundSign /></IconButton>
              <PanelGrip />
            </PanelHeader>
            <Tree>
              <Branch level={0} open bar="#ffadb0">
                <Eye />
                <ComponentChip><ComponentIcon />まな板台2 v1</ComponentChip>
                <Radio />
              </Branch>
              <Branch level={1}><Gear /><TreeName>ドキュメントの設定</TreeName></Branch>
              <Branch level={1}><Folder /><TreeName>ビュー管理</TreeName></Branch>
              <Branch level={1}><Eye off /><Folder /><TreeName>原点</TreeName></Branch>
              <Branch level={1}>
                <Eye />
                <HatchedItem>
                  <Folder />
                  ボディ
                  <RowHatch aria-hidden="true">
                    <defs>
                      <pattern id="hatch" width="8" height="4" patternUnits="userSpaceOnUse">
                        <path d="M1 4l4-4" stroke="#7f96bd" strokeWidth="2" />
                      </pattern>
                    </defs>
                    <rect width="100%" height="4" fill="url(#hatch)" />
                  </RowHatch>
                </HatchedItem>
              </Branch>
              <Branch level={1} open><Eye /><Folder /><TreeName>スケッチ</TreeName></Branch>
              <Branch level={3} leaf><Eye /><LockedSketch /><TreeName>スケッチ2</TreeName></Branch>
              <Branch level={1} bar="#e38fe3"><Eye off /><BodyIcon /><LinkIcon /><TreeName>まな板 v3:1</TreeName></Branch>
            </Tree>
          </Browser>
          <ViewCube />
        </CanvasTop>

        <MarkingButton $x={496} $y={137} $w={120}><Extrude size={16} />繰り返し 押し出し</MarkingButton>
        <MarkingButton $x={472} $y={168} $w={60}>
          削除
          <Art size={11} box={10}><path d="M1 1l8 8M9 1L1 9" stroke="#f0262b" strokeWidth="2.400" /></Art>
        </MarkingButton>
        <MarkingButton $x={580} $y={168} $w={90}><PressPull size={16} />プレス/プル</MarkingButton>
        <MarkingButton $x={432} $y={196} $w={80}>元に戻す<UndoIcon /></MarkingButton>
        <MarkingButton $x={600} $y={196} $w={80} $dim disabled><UndoIcon flip />やり直し</MarkingButton>
        <MarkingButton $x={442} $y={224} $w={90}>移動/コピー<Move size={15} /></MarkingButton>
        <MarkingButton $x={580} $y={224} $w={60}><Hole size={16} />穴</MarkingButton>
        <MarkingButton $x={526} $y={255} $w={60}>スケッチ<Caret size={9} /></MarkingButton>

        <ContextMenu role="menu">
          {menuSections.map((section, i) => (
            <React.Fragment key={i}>
              {i > 0 && <MenuRule />}
              {section.map((m) => (
                <MenuItem key={m.text} role="menuitem" $selected={m.selected}>
                  <MenuIcon>{m.icon}</MenuIcon>
                  <MenuText>{m.text}</MenuText>
                  {m.shortcut && <Shortcut>{m.shortcut}</Shortcut>}
                </MenuItem>
              ))}
            </React.Fragment>
          ))}
        </ContextMenu>

        <CanvasBottom>
          <PanelHeader>
            <CollapseSlot />
            <PanelTitle>コメント</PanelTitle>
            <IconButton aria-label="コメントを追加"><RoundSign plus /></IconButton>
            <PanelGrip />
          </PanelHeader>
          <NavBar>
            {navTools.map(({ Icon, name, drop }) => (
              <NavButton key={name} aria-label={name}><Icon />{drop && <Caret size={6} />}</NavButton>
            ))}
          </NavBar>
          <Status>1 面 | 面積 : 280.00 mm^2</Status>
        </CanvasBottom>
      </Canvas>

      <Timeline>
        <Playback>
          {playback.map(({ name, d }) => (
            <IconButton key={name} aria-label={name}>
              <Art size={16} box={16}><path d={d} fill="#4a4a4a" /></Art>
            </IconButton>
          ))}
        </Playback>
        <History>
          <HistoryIcons>
            <HistoryButton aria-label="リンク"><LinkedBody /></HistoryButton>
            <HistoryButton aria-label="スケッチ"><EditSketch /></HistoryButton>
            <HistoryButton aria-label="押し出し 1"><Extrude size={16} /></HistoryButton>
            <HistoryButton aria-label="押し出し 2">
              <Extrude size={16} />
              <Hatch width="16" height="6"><path d="M1 5.500L5 .5M6 5.500l4-5M11 5.500l4-5" stroke="#444" strokeWidth="1.800" /></Hatch>
            </HistoryButton>
          </HistoryIcons>
          <svg width="92" height="8" aria-hidden="true">
            <path d="M11 0v5h71V0M34 1v4M58 1v4" fill="none" stroke="#c4c4c4" strokeWidth="2" />
          </svg>
        </History>
        <Marker width="12" height="32" aria-hidden="true">
          <path d="M0 0h12v3L7 8v24H5V8L0 3z" fill="#5e5e5e" />
        </Marker>
        <Spacer />
        <IconButton aria-label="設定"><Gear /></IconButton>
      </Timeline>
    </Window>
  );
}
